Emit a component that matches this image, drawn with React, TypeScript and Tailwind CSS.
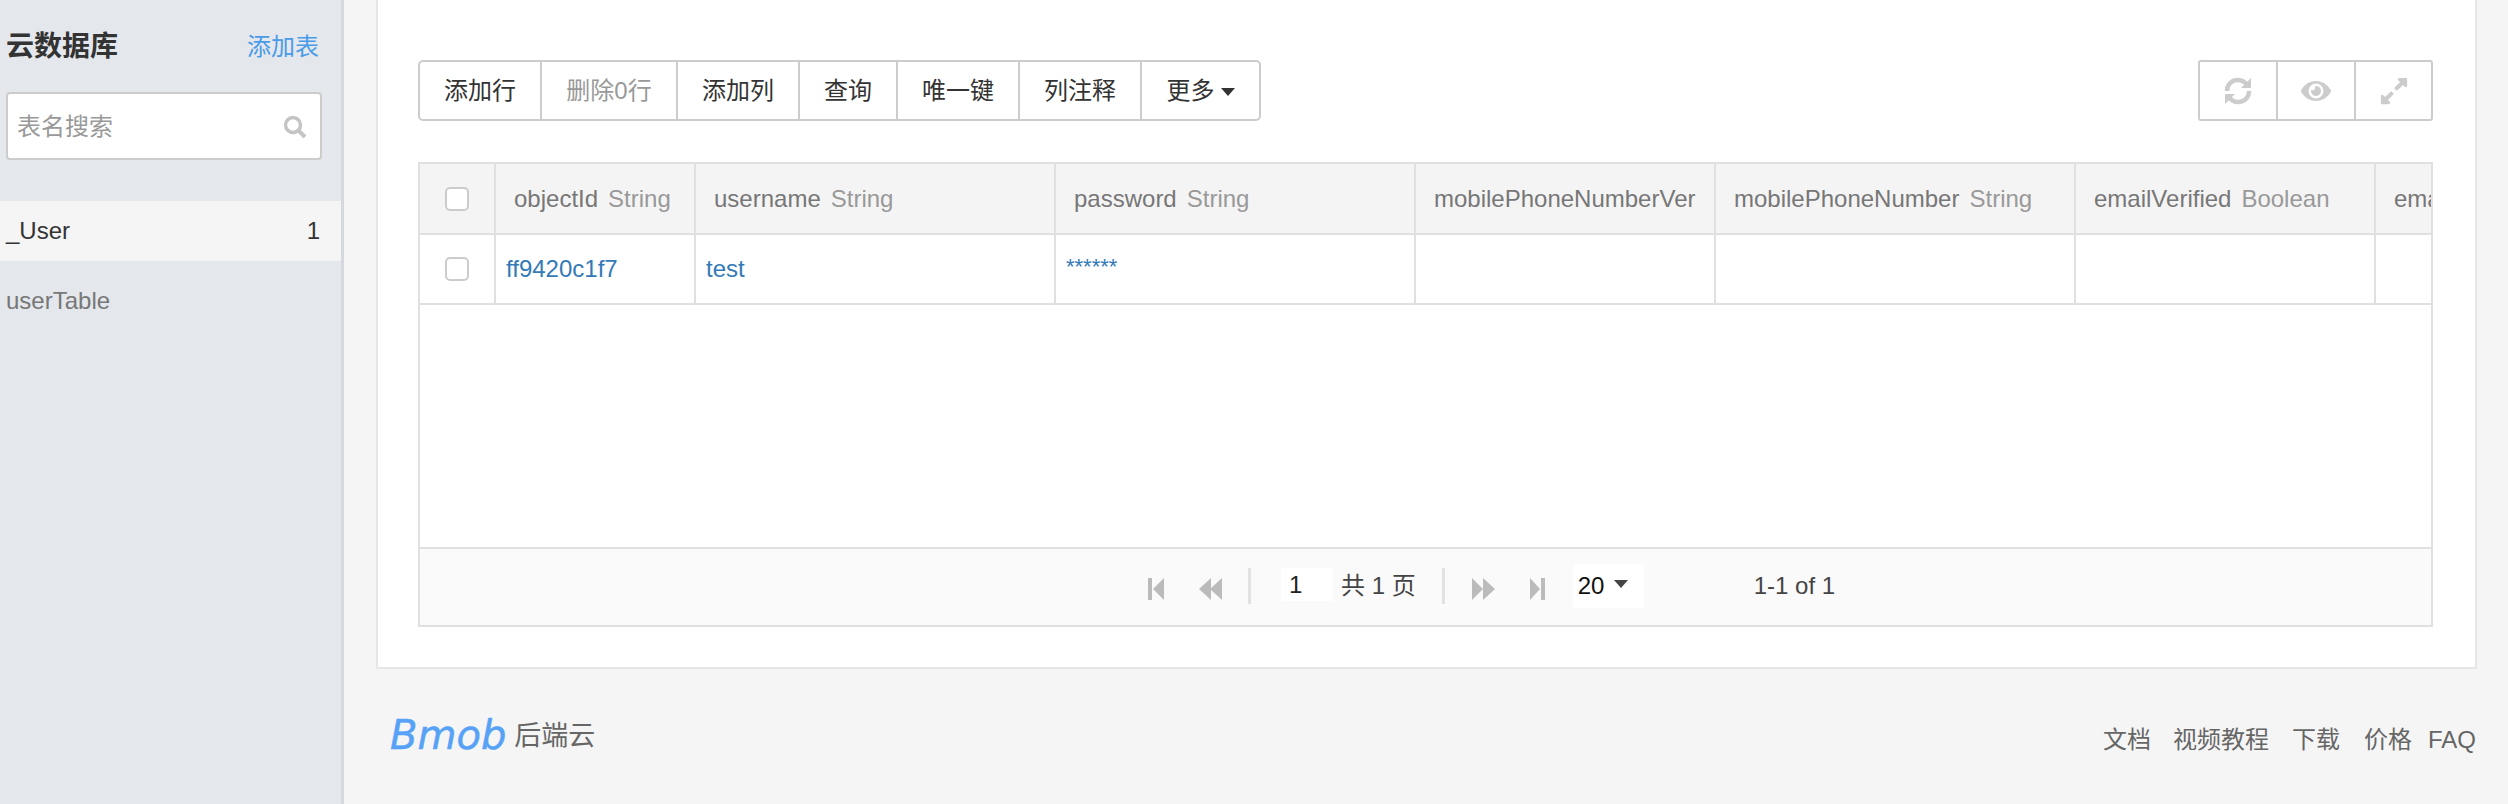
import React from "react";
import { FaEye, FaExpandAlt } from "react-icons/fa";

const columns = [
  { name: "objectId", type: "String", width: "w-[200px]", value: "ff9420c1f7" },
  { name: "username", type: "String", width: "w-[360px]", value: "test" },
  { name: "password", type: "String", width: "w-[360px]", value: "******" },
  { name: "mobilePhoneNumberVer", type: "", width: "w-[300px]", value: "" },
  { name: "mobilePhoneNumber", type: "String", width: "w-[360px]", value: "" },
  { name: "emailVerified", type: "Boolean", width: "w-[300px]", value: "" },
  { name: "email", type: "String", width: "w-[300px]", value: "" },
];

const toolbarButtons = [
  { label: "添加行", width: "w-[122px]", color: "text-[#333]" },
  { label: "删除0行", width: "w-[136px]", color: "text-[#999]" },
  { label: "添加列", width: "w-[122px]", color: "text-[#333]" },
  { label: "查询", width: "w-[98px]", color: "text-[#333]" },
  { label: "唯一键", width: "w-[122px]", color: "text-[#333]" },
  { label: "列注释", width: "w-[122px]", color: "text-[#333]" },
];

const Checkbox = () => (
  <span className="block h-[24px] w-[24px] rounded-[5px] border-2 border-[#ccc] bg-white" />
);

const Sidebar = () => (
  <aside className="h-full w-[344px] shrink-0 border-r-[3px] border-[#d5d8dc] bg-[#e4e7ec]">
    <div className="flex h-[92px] items-center justify-between pl-[6px] pr-[22px] pt-[2px]">
      <span className="text-[28px] font-bold text-[#333]">云数据库</span>
      <span className="text-[24px] text-[#4a9be8]">添加表</span>
    </div>
    <div className="ml-[6px] flex h-[68px] w-[316px] items-center justify-between rounded-[4px] border-2 border-[#ccc] bg-white pl-[9px] pr-[13px] pt-[2px] text-[24px] text-[#999]">
      <span>表名搜索</span>
      <svg width="24" height="24" viewBox="0 0 24 24" fill="none" stroke="#c4c4c4">
        <circle cx="10" cy="10" r="7.5" strokeWidth="3.4" />
        <path d="M15.5 15.5 L22 22" strokeWidth="4" />
      </svg>
    </div>
    <div className="mt-[41px] flex h-[60px] items-center justify-between bg-[#f5f5f5] pl-[6px] pr-[21px] text-[24px] text-[#333]">
      <span>_User</span>
      <span>1</span>
    </div>
    <div className="flex h-[80px] items-center pl-[6px] text-[24px] text-[#777]">userTable</div>
  </aside>
);

const Toolbar = () => (
  <div className="flex items-start justify-between">
    <div className="flex h-[61px] w-[843px] rounded-[5px] border-2 border-[#ccc] bg-white text-[24px]">
      {toolbarButtons.map((b) => (
        <div key={b.label} className={`flex h-full items-center justify-center border-r-2 border-[#ccc] ${b.width} ${b.color}`}>
          {b.label}
        </div>
      ))}
      <div className="flex h-full flex-1 items-center justify-center gap-[6px] text-[#333]">
        <span>更多</span>
        <span className="mt-[3px] h-0 w-0 border-x-[7px] border-t-[8px] border-x-transparent border-t-[#333]" />
      </div>
    </div>
    <div className="flex h-[61px] w-[235px] rounded-[3px] border-2 border-[#ccc] bg-white text-[#ccc]">
      <div className="flex w-[78px] items-center justify-center border-r-2 border-[#ccc]">
        <svg width="28" height="28" viewBox="0 0 28 28" fill="none" stroke="#ccc" strokeWidth="4.5">
          <path d="M3 14 C3 7 8 3 14 3 C18 3 21 5 23 8" />
          <path d="M25 14 C25 21 20 25 14 25 C10 25 7 23 5 20" />
          <path d="M27 1 V11 H17 Z" fill="#ccc" stroke="none" />
          <path d="M1 27 V17 H11 Z" fill="#ccc" stroke="none" />
        </svg>
      </div>
      <div className="flex w-[78px] items-center justify-center border-r-2 border-[#ccc]">
        <FaEye size={30} />
      </div>
      <div className="flex flex-1 items-center justify-center">
        <FaExpandAlt size={30} />
      </div>
    </div>
  </div>
);

const Pagination = () => (
  <div className="flex h-[76px] items-start bg-[#fafafa] text-[24px]">
    <svg className="ml-[728px] mt-[29px]" width="17" height="22" viewBox="0 0 17 22" fill="#bbb">
      <rect x="0" y="0" width="4" height="22" />
      <path d="M16 0 V22 L5 11 Z" />
    </svg>
    <svg className="ml-[34px] mt-[29px]" width="24" height="22" viewBox="0 0 24 22" fill="#bbb">
      <path d="M12 0 V22 L0 11 Z" />
      <path d="M23 0 V22 L11 11 Z" />
    </svg>
    <span className="ml-[25px] mt-[19px] h-[36px] w-[3px] bg-[#e2e2e2]" />
    <div className="ml-[30px] mt-[19px] flex h-[33px] w-[52px] items-center bg-white pl-[8px] text-[#222]">1</div>
    <span className="ml-[8px] mt-[19px] text-[#444]">共 1 页</span>
    <span className="ml-[26px] mt-[19px] h-[36px] w-[3px] bg-[#e2e2e2]" />
    <svg className="ml-[26px] mt-[29px]" width="24" height="22" viewBox="0 0 24 22" fill="#bbb">
      <path d="M1 0 V22 L12 11 Z" />
      <path d="M12 0 V22 L24 11 Z" />
    </svg>
    <svg className="ml-[35px] mt-[29px]" width="15" height="22" viewBox="0 0 15 22" fill="#bbb">
      <path d="M0 0 V22 L10 11 Z" />
      <rect x="11" y="0" width="4" height="22" />
    </svg>
    <div className="ml-[28px] mt-[15px] flex h-[44px] w-[71px] items-center gap-[10px] bg-white pl-[5px] text-[#111]">
      <span>20</span>
      <span className="mb-[4px] h-0 w-0 border-x-[7px] border-t-[8px] border-x-transparent border-t-[#444]" />
    </div>
    <span className="ml-[110px] mt-[19px] text-[#444]">1-1 of 1</span>
  </div>
);

const DataTable = () => (
  <div className="mt-[41px] w-[2015px] overflow-hidden border-2 border-[#e0e0e0] bg-white">
    <div className="flex h-[71px] border-b-2 border-[#e0e0e0] bg-[#f4f4f4]">
      <div className="flex w-[76px] shrink-0 items-center justify-center border-r-2 border-[#e0e0e0]">
        <Checkbox />
      </div>
      {columns.map((c) => (
        <div
          key={c.name}
          className={`flex shrink-0 items-center overflow-hidden whitespace-nowrap border-r-2 border-[#e0e0e0] pl-[18px] text-[24px] ${c.width}`}
        >
          <span className="text-[#777]">{c.name}</span>
          {c.type && <span className="ml-[10px] text-[#999]">{c.type}</span>}
        </div>
      ))}
    </div>
    <div className="flex h-[70px] border-b-2 border-[#e0e0e0]">
      <div className="flex w-[76px] shrink-0 items-center justify-center border-r-2 border-[#e0e0e0]">
        <Checkbox />
      </div>
      {columns.map((c) => (
        <div
          key={c.name}
          className={`flex shrink-0 items-center border-r-2 border-[#e0e0e0] pl-[10px] text-[24px] text-[#337ab7] ${c.width}`}
        >
          {c.value === "******" ? <span className="mb-[6px] text-[22px]">{c.value}</span> : c.value}
        </div>
      ))}
    </div>
    <div className="h-[244px] border-b-2 border-[#e0e0e0]" />
    <Pagination />
  </div>
);

const Footer = () => (
  <div className="flex items-center justify-between pl-[14px] pr-[32px] pt-[40px]">
    <div className="flex items-center gap-[8px]">
      <span className="font-['DejaVu_Sans',sans-serif] text-[40px] italic leading-[52px] text-[#56a2f6] [-webkit-text-stroke:0.5px_#56a2f6]">Bmob</span>
      <span className="mt-[2px] text-[27px] text-[#666]">后端云</span>
    </div>
    <div className="flex pt-[10px] text-[24px] text-[#666]">
      <span>文档</span>
      <span className="ml-[22px]">视频教程</span>
      <span className="ml-[23px]">下载</span>
      <span className="ml-[24px]">价格</span>
      <span className="ml-[16px]">FAQ</span>
    </div>
  </div>
);

export default function App() {
  return (
    <div className="flex h-[804px] w-[2508px] overflow-hidden bg-[#f5f5f5] font-['Liberation_Sans','Noto_Sans_CJK_SC',sans-serif]">
      <Sidebar />
      <main className="w-[2164px] pl-[32px]">
        <div className="h-[669px] w-[2101px] border-x-2 border-b-2 border-[#e6e6e6] bg-white pl-[40px] pt-[60px]">
          <div className="w-[2015px]">
            <Toolbar />
          </div>
          <DataTable />
        </div>
        <Footer />
      </main>
    </div>
  );
}
